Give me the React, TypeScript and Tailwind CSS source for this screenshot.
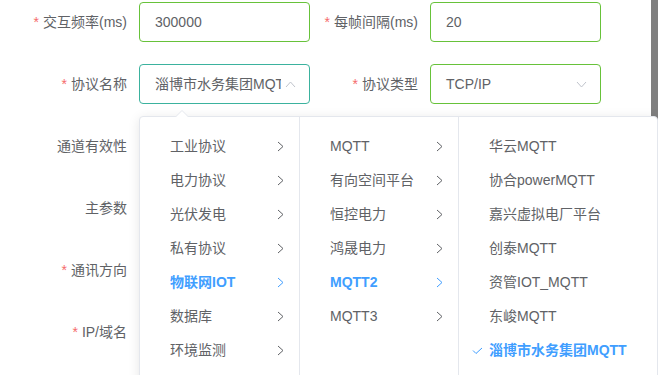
import React from 'react';

const font = { fontFamily: '"Liberation Sans", "Noto Sans CJK SC", sans-serif' };

const Chevron: React.FC<{ dir?: 'right' | 'up' | 'down'; className?: string }> = ({ dir = 'right', className }) => {
  if (dir === 'right')
    return (
      <svg className={className} width="7" height="11" viewBox="0 0 7 11" fill="none" stroke="currentColor" strokeWidth="1">
        <polyline points="1,1 6,5.5 1,10" />
      </svg>
    );
  return (
    <svg className={className} width="11" height="7" viewBox="0 0 11 7" fill="none" stroke="currentColor" strokeWidth="1">
      {dir === 'up' ? <polyline points="1,6 5.5,1 10,6" /> : <polyline points="1,1 5.5,6 10,1" />}
    </svg>
  );
};

const Label: React.FC<{ text: string; required?: boolean }> = ({ text, required }) => (
  <div className="w-[110px] shrink-0 pr-3 text-right leading-[40px] text-sm text-[#606266]">
    {required && <span className="text-[#f56c6c] mr-1">*</span>}
    {text}
  </div>
);

const col1 = ['工业协议', '电力协议', '光伏发电', '私有协议', '物联网IOT', '数据库', '环境监测'];
const col2 = ['MQTT', '有向空间平台', '恒控电力', '鸿晟电力', 'MQTT2', 'MQTT3'];
const col3 = ['华云MQTT', '协合powerMQTT', '嘉兴虚拟电厂平台', '创泰MQTT', '资管IOT_MQTT', '东峻MQTT', '淄博市水务集团MQTT'];

const App: React.FC = () => {
  return (
    <div className="relative w-[658px] h-[375px] overflow-hidden bg-white" style={font}>
      <div className="absolute right-0 top-0 w-[7px] h-full bg-[#7f7f7f]"></div>

      <div className="pl-[29px] pt-[2px] flex flex-col gap-[22px]">
        <div className="flex h-10 gap-[10px]">
          <div className="flex">
            <Label text="交互频率(ms)" required />
            <div className="w-[171px] h-10 border border-[#67c23a] rounded flex items-center px-[15px] text-sm text-[#606266]">300000</div>
          </div>
          <div className="flex">
            <Label text="每帧间隔(ms)" required />
            <div className="w-[171px] h-10 border border-[#67c23a] rounded flex items-center px-[15px] text-sm text-[#606266]">20</div>
          </div>
        </div>

        <div className="flex h-10 gap-[10px]">
          <div className="flex">
            <Label text="协议名称" required />
            <div className="relative w-[171px] h-10 border border-[#3bb29e] rounded flex items-center pl-[15px] pr-[28px] text-sm text-[#606266]">
              <span className="flex-1 overflow-hidden whitespace-nowrap">淄博市水务集团MQTT</span>
              <Chevron dir="up" className="absolute right-[13px] top-[16px] text-[#c0c4cc]" />
            </div>
          </div>
          <div className="flex">
            <Label text="协议类型" required />
            <div className="relative w-[171px] h-10 border border-[#67c23a] rounded flex items-center pl-[15px] pr-[30px] text-sm text-[#606266]">
              <span className="flex-1">TCP/IP</span>
              <Chevron dir="down" className="absolute right-[13px] top-[16px] text-[#c0c4cc]" />
            </div>
          </div>
        </div>

        <div className="flex h-10"><Label text="通道有效性" /></div>
        <div className="flex h-10"><Label text="主参数" /></div>
        <div className="flex h-10"><Label text="通讯方向" required /></div>
        <div className="flex h-10"><Label text="IP/域名" required /></div>
      </div>

      <div className="absolute left-[139px] top-[116px] right-0 h-[300px] bg-white border border-[#e4e7ed] rounded shadow-[0_2px_12px_0_rgba(0,0,0,0.1)] flex text-sm text-[#606266]">
        <svg className="absolute left-[35px] top-[-7px]" width="14" height="8" viewBox="0 0 14 8">
          <polygon points="0,7.5 7,0.5 14,7.5" fill="#ffffff" stroke="#e4e7ed" strokeWidth="1" />
          <rect x="0" y="7" width="14" height="2" fill="#ffffff" />
        </svg>

        <div className="w-[160px] shrink-0 border-r border-[#e4e7ed] pt-3">
          {col1.map(t => {
            const active = t === '物联网IOT';
            return (
              <div key={t} className={`h-[34px] flex items-center pl-[30px] pr-[15px] ${active ? 'text-[#409eff] font-bold' : ''}`}>
                <span className="flex-1">{t}</span>
                <Chevron className={active ? 'text-[#409eff]' : 'text-[#606266]'} />
              </div>
            );
          })}
        </div>

        <div className="w-[159px] shrink-0 border-r border-[#e4e7ed] pt-3">
          {col2.map(t => {
            const active = t === 'MQTT2';
            return (
              <div key={t} className={`h-[34px] flex items-center pl-[30px] pr-[15px] ${active ? 'text-[#409eff] font-bold' : ''}`}>
                <span className="flex-1">{t}</span>
                <Chevron className={active ? 'text-[#409eff]' : 'text-[#606266]'} />
              </div>
            );
          })}
        </div>

        <div className="flex-1 pt-3">
          {col3.map(t => {
            const active = t === '淄博市水务集团MQTT';
            return (
              <div key={t} className={`relative h-[34px] flex items-center pl-[30px] whitespace-nowrap ${active ? 'text-[#409eff] font-bold' : ''}`}>
                {active && (
                  <svg className="absolute left-[13px] top-[14px]" width="11" height="8" viewBox="0 0 11 8" fill="none" stroke="#409eff" strokeWidth="1">
                    <polyline points="1,3.5 4,6.5 10,1" />
                  </svg>
                )}
                {t}
              </div>
            );
          })}
        </div>
      </div>
    </div>
  );
};

export default App;
